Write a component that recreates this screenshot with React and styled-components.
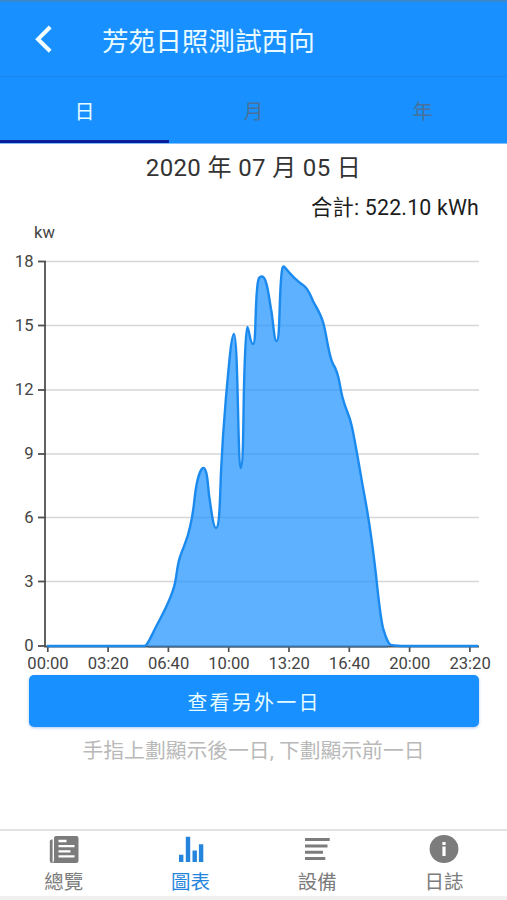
import React, { useState } from 'react';
import styled, { createGlobalStyle } from 'styled-components';

const GlobalStyle = createGlobalStyle`
    * {
        box-sizing: border-box;
    }

    body {
        margin: 0;
        background-color: #fff;
        font-family: Roboto, "Noto Sans CJK TC", sans-serif;
    }

    button {
        border: none;
        padding: 0;
        background: none;
        font-family: inherit;
        cursor: pointer;
    }
`

const Page = styled.div`
    display: flex;
    flex-direction: column;
    width: 100%;
    height: 900px;
    overflow: hidden;
    background-color: #fff;
`

const Header = styled.header`
    display: flex;
    align-items: center;
    height: 77px;
    padding-left: 34px;
    padding-top: 2px;
    background-color: #1890ff;
    border-top: 2px solid #3788cd;
    border-bottom: 1px solid #1685ee;

    h1 {
        margin: 0;
        margin-left: 48px;
        padding-top: 4px;
        font-size: 26.6px;
        line-height: 40px;
        font-weight: 400;
        color: #e9fbff;
    }
`

const BackButton = styled.button`
    display: flex;
    width: 20px;
    height: 30px;
    margin-top: -2px;
`

const Tabs = styled.nav`
    display: grid;
    grid-template-columns: repeat(3, 1fr);
    height: 67px;
    background-color: #1890ff;
    border-bottom: 1px solid #7fc0fb;
`

const Tab = styled.button`
    font-size: 20px;
    line-height: 30px;
    padding-top: 7px;
    color: ${({ $active }) => ($active ? '#e4fbff' : '#4a7199')};
    border-bottom: 3px solid ${({ $active }) => ($active ? '#0b1f9c' : 'transparent')};
`

const DateTitle = styled.h2`
    margin: 0;
    margin-top: 6px;
    text-align: center;
    font-size: 24px;
    line-height: 36px;
    letter-spacing: 0.35px;
    font-weight: 400;
    color: #333;
`

const Total = styled.p`
    margin: 0;
    margin-top: 8px;
    padding-right: 28px;
    text-align: right;
    font-size: 21.3px;
    line-height: 28px;
    letter-spacing: 0.2px;
    color: #1c1c1c;
`

const Chart = styled.svg`
    display: block;
    flex: none;
    width: 507px;
    height: 453px;

    text {
        font-size: 16.6px;
        fill: #444;
    }
`

const DayButton = styled.button`
    flex: none;
    height: 52px;
    margin: 0 28px 0 29px;
    padding-top: 3px;
    border-radius: 5px;
    background-color: #1890ff;
    box-shadow: 0 1px 3px rgba(24, 100, 200, 0.35);
    font-size: 20px;
    line-height: 30px;
    letter-spacing: 2.2px;
    color: #e4fbff;
`

const Hint = styled.p`
    margin: 0;
    margin-top: 7px;
    text-align: center;
    font-size: 20.8px;
    line-height: 34px;
    color: #b9b9b9;
`

const BottomNav = styled.nav`
    display: grid;
    grid-template-columns: repeat(4, 1fr);
    height: 71px;
    margin-top: auto;
    border-top: 2px solid #e2e2e2;
    border-bottom: 4px solid #f0f0f0;
`

const NavItem = styled.button`
    display: flex;
    flex-direction: column;
    align-items: center;
    padding-top: 4px;
    padding-left: 1px;
    font-size: 19.5px;
    line-height: 30px;
    color: ${({ $active }) => ($active ? '#2585dc' : '#7c7c7c')};

    svg {
        display: block;
        width: 30px;
        height: 30px;
        margin-bottom: 3px;
    }
`

const yTicks = [
    { label: '18', y: 261.5 },
    { label: '15', y: 325.5 },
    { label: '12', y: 390 },
    { label: '9', y: 454 },
    { label: '6', y: 517.5 },
    { label: '3', y: 581.5 },
    { label: '0', y: 646 },
];

const xTicks = ['00:00', '03:20', '06:40', '10:00', '13:20', '16:40', '20:00', '23:20'];

const curve =
    'M47 646 L145 646 C148 645 153 632 158 623 C165 610 172 597 175 583 ' +
    'C177 574 177 566 180 557 C183 547 187 542 190 527 C194 511 194 500 196 488 ' +
    'C198 476 201 468 203.5 468 C207 468 208 485 209 495 C211 507 213 528 216 528 ' +
    'C220 528 220 494 221 472 C222 450 224 420 226 397 C228 377 231 334 234 334 ' +
    'C238 334 238 468 240.5 468 C244 468 243 405 244.5 370 C245 353 246 327 247.3 327 ' +
    'C249 327 250 344 253 344 C256 344 255 311 257 290 C258 278 259 276.5 262 276.5 ' +
    'C267 276.5 269 298 271 309 C273 318 274 341 276.5 341 C280 341 279 305 281 280 ' +
    'C282 266 283 265 285 267.5 C291 275 297 281 303 285 C308 288 310 294 313 301 ' +
    'C316 307 320 312 323 322 C327 335 328 354 333 364 C340 374 339 386 343 399 ' +
    'C346 411 349 413 352 427 C356 446 360 471 364 493 C369 519 372 540 376 575 ' +
    'C378 594 380 615 383 628 C386 638 388 644 391 645 C396 646 400 646 407 646 L478 646';

const navItems = [
    {
        name: '總覽',
        icon: (
            <svg viewBox="0 0 30 30">
                <path fill="currentColor" d="M3.6 4.5H2.6Q0.8 4.5 0.8 6.5V26Q0.8 28 3 28H3.6Z" />
                <path
                    fill="currentColor"
                    fillRule="evenodd"
                    d="M7 1H27.3Q29.5 1 29.5 3.2V25.8Q29.5 28 27.3 28H3.5Q5 27 5 25V3Q5 1 7 1Z
                        M9.5 4.8V7.2H17.5V4.8Z M9.5 10V12.3H25.5V10Z M9.5 15.2V17.5H21.5V15.2Z M9.5 20.3V22.6H25.5V20.3Z"
                />
            </svg>
        ),
    },
    {
        name: '圖表',
        icon: (
            <svg viewBox="0 0 30 30">
                <path fill="currentColor" d="M3 19.8h4.4V27H3zM9.8 1.8h4.4V27H9.8zM16.5 15.6h4.4V27h-4.4zM22.9 9.3h4.4V27h-4.4z" />
            </svg>
        ),
    },
    {
        name: '設備',
        icon: (
            <svg viewBox="0 0 30 30">
                <path fill="currentColor" d="M3 3h24.7v3H3zM3 9.5h22.5v3H3zM3 15.8h18v3H3zM3 22.1h20.3v3H3z" />
            </svg>
        ),
    },
    {
        name: '日誌',
        icon: (
            <svg viewBox="0 0 30 30">
                <ellipse cx="15" cy="14" rx="14.4" ry="14" fill="currentColor" />
                <path fill="#fff" d="M13.4 7.1h3.2V10h-3.2zM13.4 11.5h3.2v9.4h-3.2z" />
            </svg>
        ),
    },
];

function PowerChart() {
    return (
        <Chart viewBox="0 222 507 453">
            <text x="34" y="238">kw</text>
            {yTicks.map(({ label, y }) => (
                <g key={label}>
                    {label !== '0' && <path d={`M46 ${y}H479`} stroke="#d6d6d6" strokeWidth="1.7" />}
                    <path d={`M38 ${y}H46`} stroke="#505050" strokeWidth="1.8" />
                    <text x="33.5" y={y + 5} textAnchor="end">{label}</text>
                </g>
            ))}
            <path d="M45 261V646.5H479" fill="none" stroke="#505050" strokeWidth="1.8" />
            {xTicks.map((label, i) => (
                <g key={label}>
                    <path d={`M${47.8 + i * 60.3} 646V652`} stroke="#505050" strokeWidth="1.7" />
                    <text x={48 + i * 60.3} y="669" textAnchor="middle">{label}</text>
                </g>
            ))}
            <path d={`${curve}Z`} fill="#1890ff" fillOpacity="0.7" />
            <path d={curve} fill="none" stroke="#1b8aee" strokeWidth="2.4" strokeLinejoin="round" />
            <path d="M148 646.7H388" stroke="#426b94" strokeWidth="1.6" />
        </Chart>
    );
}

function App() {
    const [tab, setTab] = useState('日');
    const [page, setPage] = useState('圖表');

    return (
        <>
            <GlobalStyle />
            <Page>
                <Header>
                    <BackButton aria-label="back">
                        <svg width="20" height="30" viewBox="0 0 20 30">
                            <path d="M16.2 3L4 15.2L16.2 27.2" fill="none" stroke="#f4ffff" strokeWidth="4" />
                        </svg>
                    </BackButton>
                    <h1>芳苑日照測試西向</h1>
                </Header>
                <Tabs>
                    {['日', '月', '年'].map((name) => (
                        <Tab key={name} $active={tab === name} onClick={() => setTab(name)}>{name}</Tab>
                    ))}
                </Tabs>
                <DateTitle>2020 年 07 月 05 日</DateTitle>
                <Total>合計: 522.10 kWh</Total>
                <PowerChart />
                <DayButton>查看另外一日</DayButton>
                <Hint>手指上劃顯示後一日, 下劃顯示前一日</Hint>
                <BottomNav>
                    {navItems.map(({ name, icon }) => (
                        <NavItem key={name} $active={page === name} onClick={() => setPage(name)}>
                            {icon}
                            {name}
                        </NavItem>
                    ))}
                </BottomNav>
            </Page>
        </>
    );
}
export default App;
